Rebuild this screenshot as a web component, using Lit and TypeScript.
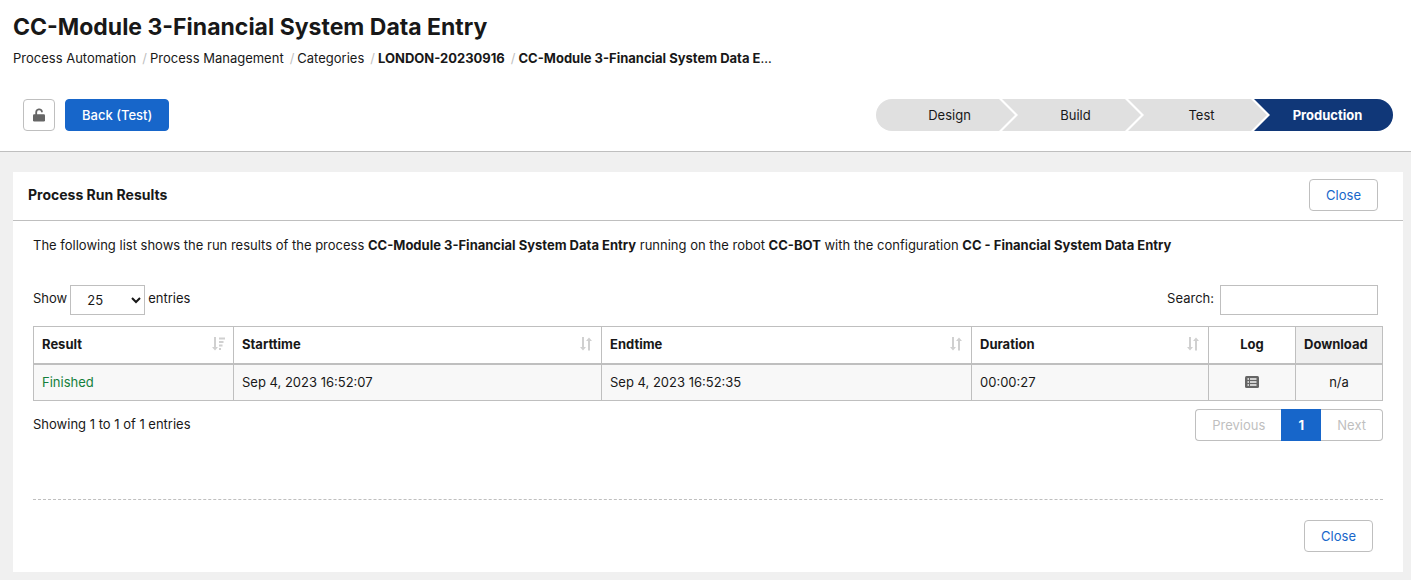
import { LitElement, html, css, svg } from "lit";
import { customElement, state } from "lit/decorators.js";
import { classMap } from "lit/directives/class-map.js";

const sortBoth = html`<svg class="sort" viewBox="0 0 14 14" aria-hidden="true">
  <path d="M3 0h2v10h2L4 13.500 1 10h2z" />
  <path d="M9 13.500h2V4h2L10 0.500 7 4h2z" />
</svg>`;

const sortDesc = html`<svg class="sort" viewBox="0 0 14 14" aria-hidden="true">
  <path d="M3 0h2v10h2L4 13.500 1 10h2z" />
  <path d="M8 0.500h6v2H8zM8 4h4.500v2H8zM8 7.500h3.500v2H8zM8 11h2v2H8z" />
</svg>`;

const lockOpen = html`<svg class="lock" viewBox="0 0 14 14" aria-hidden="true">
  <path d="M4.200 7V4.300a2.900 2.900 0 0 1 5.700-.7" fill="none" stroke="currentColor" stroke-width="1.800" stroke-linecap="round" />
  <rect x="1" y="6.300" width="12" height="7.200" rx="1.200" fill="currentColor" />
</svg>`;

const logIcon = html`<svg class="log-icon" viewBox="0 0 14 12" aria-hidden="true">
  <rect width="14" height="12" rx="1.500" fill="#666" />
  ${[3, 6, 9].map((y) => svg`<rect x="2.500" y=${y - 0.7} width="1.500" height="1.400" fill="#fff" /><rect x="5" y=${y - 0.7} width="6.500" height="1.400" fill="#fff" />`)}
</svg>`;

@customElement("app-root")
export class AppRoot extends LitElement {
  @state() private stage = "Production";

  private crumbs = ["Process Automation", "Process Management", "Categories", "LONDON-20230916", "CC-Module 3-Financial System Data E"];
  private stages = ["Design", "Build", "Test", "Production"];
  private runs = [{ result: "Finished", start: "Sep 4, 2023 16:52:07", end: "Sep 4, 2023 16:52:35", duration: "00:00:27", download: "n/a" }];

  static styles = css`
    :host {
      display: block;
      min-height: 100vh;
      background: #f0f0f0;
      color: #181818;
      font: 13px/20px Inter, "Liberation Sans", sans-serif;
    }
    * { box-sizing: border-box; }
    button, input, select { font: inherit; color: inherit; }
    .header { background: #fff; border-bottom: 1px solid #bfbfbf; padding: 10px 18px 20px 13px; }
    h1 { margin: 0; font-size: 23px; line-height: 34px; font-weight: 700; }
    .crumbs { display: flex; list-style: none; margin: 0; padding: 4px 0 0; }
    .crumbs li { display: flex; }
    .crumbs li + li::before { content: "/"; color: #bfbfbf; padding: 0 3px 0 6px; }
    .crumbs a { color: inherit; text-decoration: none; white-space: nowrap; }
    .crumbs .strong { font-weight: 700; }
    .toolbar { display: flex; align-items: center; justify-content: space-between; padding: 31px 0 0 10px; }
    .actions { display: flex; gap: 10px; }
    .btn { height: 32px; padding: 0 16px; border: 1px solid #bfbfbf; border-radius: 4px; background: #fff; color: #1766ca; }
    .btn.icon { width: 32px; padding: 0; display: grid; place-items: center; color: #666; }
    .lock { width: 14px; height: 14px; }
    .btn.primary { background: #1766ca; border-color: #1766ca; color: #fff; font-weight: 500; }
    .stages { display: flex; border-radius: 16px; overflow: hidden; }
    .stage {
      width: 139px; height: 32px; border: 0; padding: 0 0 0 8px; background: #e0e0e0;
      clip-path: polygon(0 0, calc(100% - 16px) 0, 100% 50%, calc(100% - 16px) 100%, 0 100%, 16px 50%);
    }
    .stage + .stage { margin-left: -13px; }
    .stage:first-child { clip-path: polygon(0 0, calc(100% - 16px) 0, 100% 50%, calc(100% - 16px) 100%, 0 100%); }
    .stage:last-child { clip-path: polygon(0 0, 100% 0, 100% 100%, 0 100%, 16px 50%); }
    .stage.active { background: #103778; color: #fff; font-weight: 700; }
    .card { margin: 20px 8px 8px 13px; background: #fff; }
    .card-head { display: flex; justify-content: space-between; align-items: center; height: 49px; padding: 0 25px 2px 15px; border-bottom: 1px solid #bfbfbf; }
    h2 { margin: 0; font-size: 14px; line-height: 20px; font-weight: 700; }
    .card-body { padding: 14px 20px 20px; }
    p { margin: 0; }
    b, th { font-weight: 700; }
    .controls { display: flex; justify-content: space-between; margin-top: 30px; }
    .field { display: flex; gap: 3px; line-height: 26px; }
    .search { gap: 6px; padding-right: 5px; }
    select, input { height: 30px; border: 1px solid #bfbfbf; border-radius: 0; background: #fff; }
    select { width: 75px; padding: 0 0 0 12px; }
    input { width: 158px; padding: 0 8px; }
    table { width: 100%; table-layout: fixed; border-collapse: collapse; margin-top: 11px; }
    th, td { border: 1px solid #bfbfbf; padding: 0 8px; text-align: left; height: 37px; }
    thead th { border-bottom-width: 2px; padding-bottom: 2px; }
    tbody td { background: #f8f8f8; }
    .w1 { width: 200px; } .w2 { width: 368px; } .w3 { width: 370px; } .w4 { width: 237px; } .w5 { width: 87px; }
    .th { display: flex; align-items: center; justify-content: space-between; }
    .sort { width: 14px; height: 14px; fill: #d0d0d0; }
    th.center, td.center { text-align: center; white-space: nowrap; }
    .shade { background: #f0f0f0; }
    .ok { color: #14803c; }
    .log { border: 0; background: none; padding: 0; display: grid; margin: 0 auto; }
    .log-icon { width: 14px; height: 12px; }
    .foot { display: flex; justify-content: space-between; margin-top: 8px; }
    .info { line-height: 31px; }
    .pager { display: flex; }
    .pager button { height: 32px; padding: 0 16px; border: 1px solid #bfbfbf; background: #fff; }
    .pager button:disabled { color: #bfbfbf; }
    .pager button:first-child { border-radius: 4px 0 0 4px; border-right: 0; }
    .pager button:last-child { border-radius: 0 4px 4px 0; border-left: 0; }
    .pager .page { width: 40px; background: #1766ca; border-color: #1766ca; color: #fff; font-weight: 700; }
    .bottom { display: flex; justify-content: flex-end; margin-top: 58px; padding: 20px 10px 0; border-top: 1px dashed #bfbfbf; }
  `;

  render() {
    const last = this.crumbs.length - 1;
    return html`
      <header class="header">
        <h1>CC-Module 3-Financial System Data Entry</h1>
        <nav aria-label="Breadcrumb">
          <ul class="crumbs">
            ${this.crumbs.map((c, i) => html`<li><a href="#" class=${classMap({ strong: i >= last - 1 })}>${c}</a>${i === last ? "…" : ""}</li>`)}
          </ul>
        </nav>
        <div class="toolbar">
          <div class="actions">
            <button class="btn icon" aria-label="Unlock">${lockOpen}</button>
            <button class="btn primary">Back (Test)</button>
          </div>
          <div class="stages">
            ${this.stages.map((s) => html`<button class=${classMap({ stage: true, active: s === this.stage })} @click=${() => (this.stage = s)}>${s}</button>`)}
          </div>
        </div>
      </header>
      <main class="card">
        <div class="card-head">
          <h2>Process Run Results</h2>
          <button class="btn">Close</button>
        </div>
        <div class="card-body">
          <p>The following list shows the run results of the process <b>CC-Module 3-Financial System Data Entry</b> running on the robot <b>CC-BOT</b> with the configuration <b>CC - Financial System Data Entry</b></p>
          <div class="controls">
            <div class="field">
              <label for="size">Show</label>
              <select id="size"><option>10</option><option selected>25</option><option>50</option></select>
              <span>entries</span>
            </div>
            <div class="field search">
              <label for="search">Search:</label>
              <input id="search" type="search" />
            </div>
          </div>
          <table>
            <colgroup><col class="w1" /><col class="w2" /><col class="w3" /><col class="w4" /><col class="w5" /><col class="w5" /></colgroup>
            <thead>
              <tr>
                <th><div class="th">Result ${sortDesc}</div></th>
                <th><div class="th">Starttime ${sortBoth}</div></th>
                <th><div class="th">Endtime ${sortBoth}</div></th>
                <th><div class="th">Duration ${sortBoth}</div></th>
                <th class="center">Log</th>
                <th class="shade">Download</th>
              </tr>
            </thead>
            <tbody>
              ${this.runs.map((r) => html`<tr>
                <td class="ok">${r.result}</td>
                <td>${r.start}</td>
                <td>${r.end}</td>
                <td>${r.duration}</td>
                <td class="center"><button class="log" aria-label="Log">${logIcon}</button></td>
                <td class="center">${r.download}</td>
              </tr>`)}
            </tbody>
          </table>
          <div class="foot">
            <span class="info">Showing 1 to 1 of 1 entries</span>
            <div class="pager">
              <button disabled>Previous</button><button class="page">1</button><button disabled>Next</button>
            </div>
          </div>
          <div class="bottom"><button class="btn">Close</button></div>
        </div>
      </main>
    `;
  }
}
